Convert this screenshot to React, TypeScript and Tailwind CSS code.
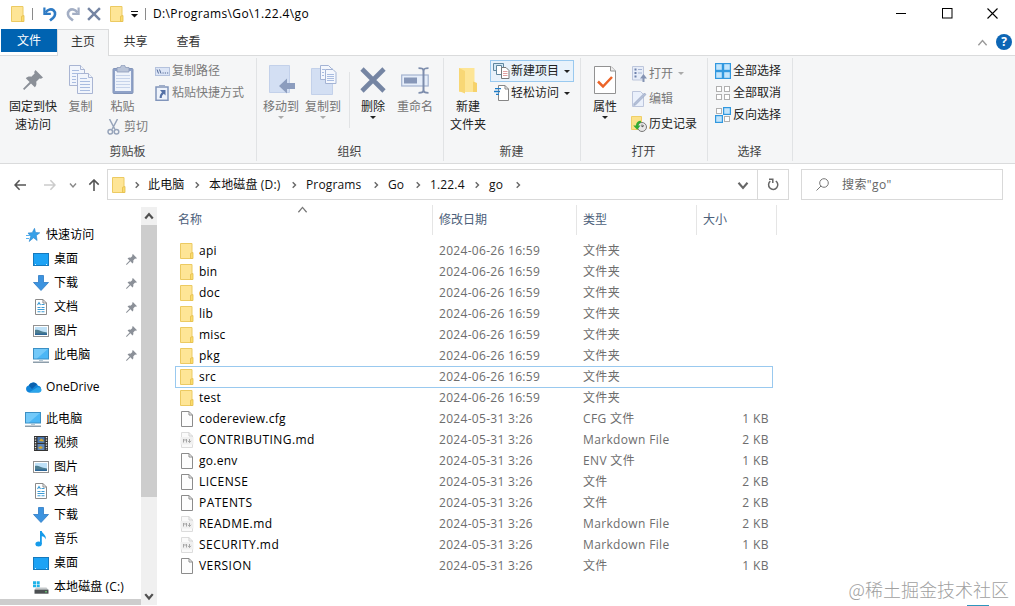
import type { ReactNode } from "react"
import clsx from "clsx"

/* ---------- Icons ---------- */

function FolderIcon() {
  return (
    <svg width="14" height="16" viewBox="0 0 14 16" className="shrink-0">
      <path d="M.5.5h11.500v15H.5z" fill="#fee596" stroke="#ecca62" />
      <path d="M10.500 15.500V10.300l2.500-.8v6z" fill="#fbdc6b" stroke="#e3bd4c" strokeWidth=".8" />
    </svg>
  )
}

function FileIcon() {
  return (
    <svg width="14" height="16" viewBox="0 0 14 16" className="shrink-0">
      <path d="M1.500.5h7.500l3.500 3.500v11.500h-11z" fill="#fdfdfd" stroke="#8c8c8c" />
      <path d="M9 .5V4h3.500" fill="none" stroke="#8c8c8c" />
    </svg>
  )
}

function MarkdownIcon() {
  return (
    <svg width="14" height="16" viewBox="0 0 14 16" className="shrink-0">
      <path d="M1.500.5h7.500l3.500 3.500v11.500h-11z" fill="#fafafa" stroke="#dcdcdc" />
      <path d="M9 .5V4h3.500" fill="none" stroke="#d0d0d0" />
      <rect x=".5" y="5" width="13" height="7.500" fill="#f0f0f0" />
      <path d="M3.500 10.500V7l1.500 1.500L6.500 7v3.500M9.500 7v3.500M8 8.800l1.500 1.700L11 8.800" fill="none" stroke="#a6a6a6" />
    </svg>
  )
}

function UndoIcon({ flip }: { flip?: boolean }) {
  return (
    <svg width="14" height="16" viewBox="0 0 14 16" className={clsx("shrink-0", flip && "-scale-x-100")}>
      <path d="M2.500 6.500C5 3.300 8.500 2.500 10.700 4.500c2.300 2.200 1.500 5.500-.7 7.500l-3 2.500" fill="none" stroke={flip ? "#a3aec4" : "#2d7ac4"} strokeWidth="2.600" />
      <path d="M1.400 1.500v6.400h6.400" fill="none" stroke={flip ? "#a3aec4" : "#2d7ac4"} strokeWidth="2.200" />
    </svg>
  )
}

function CrossIcon({ size }: { size: number }) {
  return (
    <svg width={size} height={size} viewBox="0 0 26 26" className="shrink-0">
      <path d="M2 2l22 22M24 2L2 24" stroke="#7585a3" strokeWidth="4.600" />
    </svg>
  )
}

function Caret({ className = "text-[#222]" }: { className?: string }) {
  return (
    <svg width="6" height="3" viewBox="0 0 6 3" className={clsx("shrink-0", className)}>
      <path d="M0 0h6L3 3z" fill="currentColor" />
    </svg>
  )
}

function PinIcon({ size, color }: { size: number; color: string }) {
  return (
    <svg width={size} height={size} viewBox="0 0 20 20" className="shrink-0">
      <path d="M12.500 0L20 7.500l-2 1.300-1.500-.4-3.300 3.300c.6 2.200.1 4.300-1.400 5.500l-3.800-3.800L1.200 20 0 18.800l6.600-6.800-3.800-3.800c1.500-1.500 3.400-2 5.500-1.400l3.300-3.300-.4-1.500z" fill={color} />
    </svg>
  )
}

function CopyIcon() {
  return (
    <svg width="26" height="30" viewBox="0 0 26 30">
      <g fill="#f1f5fc" stroke="#a9b5d3">
        <path d="M1.500.5h11l4 4v16h-15z" />
        <path d="M9.500 8.500h11l4 4v16h-15z" />
        <path d="M20.500 8.500v4h4M12.500.5v4h4" />
      </g>
      <path d="M4 5.500h7M4 8.500h9M4 11.500h4M4 14.500h4M4 17.500h4M12 13.500h7M12 16.500h10M12 19.500h10M12 22.500h10M12 25.500h10" stroke="#a9bce0" />
    </svg>
  )
}

function PasteIcon() {
  return (
    <svg width="22" height="30" viewBox="0 0 22 30">
      <rect x="1" y="3.500" width="20" height="25" rx="1" fill="#8fa2c8" stroke="#8294b8" />
      <rect x="3" y="6" width="16" height="20" fill="#eef3fb" />
      <path d="M5 2.500h3.500a2.500 2.500 0 0 1 5 0H17V7H5z" fill="#b9c4d8" stroke="#8b9aba" strokeWidth=".8" />
      <path d="M4 10.500h14M4 13.500h14M4 16.500h14M4 19.500h14M4 22.500h14" stroke="#c6d3ea" />
    </svg>
  )
}

function ScissorsIcon() {
  return (
    <svg width="13" height="16" viewBox="0 0 13 16" fill="none" stroke="#97a4ba" strokeWidth="1.500">
      <path d="M2.500 0l5.500 10.500M10.500 0L5 10.500" />
      <circle cx="3.300" cy="12.800" r="2.300" />
      <circle cx="9.500" cy="12.800" r="2.300" />
    </svg>
  )
}

function CopyPathIcon() {
  return (
    <svg width="15" height="9" viewBox="0 0 15 9">
      <rect x=".5" y=".5" width="14" height="8" fill="#dce5f6" stroke="#b4c2dd" />
      <path d="M2 2.500l1.500 4M4.500 2.500l1.500 4" stroke="#536a96" />
      <path d="M7.500 6h1.200M9.800 6H11M12 6h1.200" stroke="#536a96" strokeWidth="1.200" />
    </svg>
  )
}

function PasteShortcutIcon() {
  return (
    <svg width="14" height="16" viewBox="0 0 14 16">
      <rect x="1" y="2" width="12" height="13.300" fill="#eef3fb" stroke="#8195bb" strokeWidth="1.500" />
      <path d="M4 0h6v3H4z" fill="#9fadc8" />
      <path d="M5 5h5.500v5.500L8.800 8.800C7.300 10 6.800 11 6.800 13H4.600c0-2.500.8-4.200 2.400-5.800z" fill="#5470a5" />
    </svg>
  )
}

function MoveToIcon() {
  return (
    <svg width="28" height="30" viewBox="0 0 28 30">
      <path d="M2.500.5h20v27h-20z" fill="#d3dff3" stroke="#c3d1ea" />
      <path d="M12 21l8-7.500v4.500h8v6h-8v4.500z" fill="#8c9dbe" />
    </svg>
  )
}

function CopyToIcon() {
  return (
    <svg width="28" height="31" viewBox="0 0 28 31">
      <path d="M2.500 3.500h21v26h-21z" fill="#d3dff3" stroke="#c3d1ea" />
      <g fill="#f4f7fd" stroke="#a3b3d4">
        <path d="M11.500.5h8l3 3v11h-11z" />
        <path d="M16.500 4.500h7.500l3 3v11h-10.500z" />
      </g>
      <path d="M13 4.500h3M13 7.500h2M13 10.500h2M18 9.500h7M18 11.500h7M18 13.500h7M18 15.500h7" stroke="#a9bce0" />
    </svg>
  )
}

function RenameIcon() {
  return (
    <svg width="28" height="27" viewBox="0 0 28 27">
      <rect x=".7" y="8" width="26.500" height="11" fill="#e6eefa" stroke="#a4b3cf" strokeWidth="1.200" />
      <rect x="3" y="10.500" width="13" height="6" fill="#8797b8" />
      <path d="M22.500 2v23" stroke="#7d8dac" strokeWidth="2" />
      <path d="M17.500 1.200c3 0 5 .6 5 2.300 0-1.700 2-2.300 5-2.300M17.500 25.800c3 0 5-.6 5-2.300 0 1.700 2 2.300 5 2.300" fill="none" stroke="#7d8dac" strokeWidth="1.800" />
    </svg>
  )
}

function NewFolderIcon() {
  return (
    <svg width="20" height="27" viewBox="0 0 20 27">
      <path d="M1 1h15.500v14L19 17v8H1z" fill="#fde596" />
      <path d="M1 1l6 3v22.500L1 24z" fill="#f8d775" />
      <path d="M15 14.500l4 1.500v9h-4z" fill="#f6d26b" />
    </svg>
  )
}

function NewItemIcon() {
  return (
    <svg width="17" height="16" viewBox="0 0 17 16">
      <path d="M.5.5h10v7h-10z" fill="#d3e8f6" stroke="#60879f" />
      <path d="M3.500 2.500h5v9h-5z" fill="#fff" stroke="#60879f" />
      <path d="M8.500 4.500h4.500l3 3v8H8.500z" fill="#fff" stroke="#777" />
      <path d="M10 8.500h4.500M10 10.500h4.500M10 12.500h4.500" stroke="#e1a1a1" />
    </svg>
  )
}

function EasyAccessIcon() {
  return (
    <svg width="15" height="16" viewBox="0 0 15 16">
      <path d="M4.500.5H11L14.500 4v11.500h-10z" fill="#fff" stroke="#868686" />
      <path d="M11 .5V4h3.500" fill="none" stroke="#868686" />
      <path d="M1 3.700h6M0 6.500h6M2 9.300h3" stroke="#1e7cc8" strokeWidth="1.300" />
    </svg>
  )
}

function PropertiesIcon() {
  return (
    <svg width="22" height="28" viewBox="0 0 22 28">
      <path d="M.5.5H17L21.500 5v22.500H.5z" fill="#fff" stroke="#929292" />
      <path d="M16.500.5V5h5" fill="#eee" stroke="#929292" />
      <path d="M4 15.500l5 5L18 11" fill="none" stroke="#ec6428" strokeWidth="2.500" />
    </svg>
  )
}

function OpenIcon() {
  return (
    <svg width="15" height="16" viewBox="0 0 15 16">
      <path d="M.5.5h11v13.500H.5z" fill="#e7edf8" stroke="#bdc6dc" />
      <path d="M2.500 3.500h2M2.500 7h2M2.500 10.500h2" stroke="#6f82ab" strokeWidth="2" />
      <path d="M6 3.500h4M6 7h4" stroke="#a3b2d2" />
      <path d="M10.500 16v-3.500H8l3.500-4.500 3.500 4.500h-2.500V16z" fill="#8493b3" />
    </svg>
  )
}

function EditIcon() {
  return (
    <svg width="15" height="16" viewBox="0 0 15 16">
      <path d="M.5.5h8l3 3v12H.5z" fill="#eaf0fb" stroke="#bdc6dc" />
      <path d="M2 12.500l-.3 2 2-.7L14 3.500 12.500 2z" fill="#b4c0d8" stroke="#97a4c0" strokeWidth=".7" />
    </svg>
  )
}

function HistoryIcon() {
  return (
    <svg width="16" height="16" viewBox="0 0 16 16">
      <path d="M.5.5h10v13H.5z" fill="#fce28a" stroke="#efcf68" />
      <circle cx="11" cy="11" r="4.500" fill="#e7e7e7" stroke="#777" />
      <path d="M11 8.500V11l2-1.500" fill="none" stroke="#555" />
      <path d="M10 4.800c-3 0-4.800 1.700-5.100 4.600H2.200l4 4.300 3.300-4.300H7.300C7.500 8 8.400 7 10 6.800z" fill="#34ab33" />
    </svg>
  )
}

function TilesIcon({ on }: { on: boolean[] }) {
  return (
    <svg width="16" height="16" viewBox="0 0 16 16">
      {on.map((active, i) => (
        <rect
          key={i}
          x={(i % 2) * 8 + (active ? 0.6 : 1.5)}
          y={Math.floor(i / 2) * 8 + (active ? 0.6 : 1.5)}
          width={active ? 6.8 : 5}
          height={active ? 6.8 : 5}
          fill={active ? "#c2e5fc" : "#fff"}
          stroke={active ? "#3198df" : "#b0b0b0"}
          strokeWidth={active ? 1.2 : 1}
        />
      ))}
    </svg>
  )
}

function Chevron({ dir, size = 8, color = "#666", width = 1.4 }: { dir: "up" | "down" | "right"; size?: number; color?: string; width?: number }) {
  const d = { up: "M1 6l3-3.500L7 6", down: "M1 2.500L4 6l3-3.500", right: "M2.700 1.200L5.500 4 2.700 6.800" }
  return (
    <svg width={size} height={size} viewBox="0 0 8 8" className="shrink-0">
      <path d={d[dir]} fill="none" stroke={color} strokeWidth={width} />
    </svg>
  )
}

function Arrow({ className }: { className: string }) {
  return (
    <svg width="12" height="12" viewBox="0 0 12 12" className={clsx("shrink-0", className)}>
      <path d="M12 6H1.200M5.600 1.300L1 6l4.600 4.700" fill="none" stroke="currentColor" strokeWidth="1.600" />
    </svg>
  )
}

function StarIcon() {
  return (
    <svg width="14" height="14" viewBox="0 0 14 14">
      <path d="M8.500.3l1 4.200 4.300.3-3.500 2.700.8 5-3.500-2.700-4.400 3.700 1.500-5.200L2 5l4.200-.3z" fill="#37a0e8" stroke="#2583cd" strokeWidth=".6" />
      <path d="M0 7.500h4M0 10.500h3" stroke="#58b2ee" />
    </svg>
  )
}

function DesktopIcon() {
  return (
    <svg width="16" height="13" viewBox="0 0 16 13">
      <rect x=".5" y=".5" width="15" height="12" fill="#1da3f5" stroke="#1579bd" />
      <path d="M2 11.500h1M13 11.500h1" stroke="#d7effc" />
    </svg>
  )
}

function DownloadIcon() {
  return (
    <svg width="16" height="16" viewBox="0 0 16 16">
      <path d="M5.500.5h5v7h5L8 15.500.5 7.500h5z" fill="#3c93df" stroke="#2c7ac4" strokeWidth=".8" />
    </svg>
  )
}

function DocumentIcon() {
  return (
    <svg width="12" height="16" viewBox="0 0 12 16">
      <path d="M.5.5H8L11.500 4v11.500H.5z" fill="#fff" stroke="#8a8a8a" />
      <path d="M8 .5V4h3.500" fill="none" stroke="#8a8a8a" />
      <path d="M2.500 6l1.500-2.500L5.500 6M6.500 5.500h3M2.500 8.500h3M6.500 8.500h3M2.500 10.500h7M2.500 12.700h3M6.500 12.700h3" fill="none" stroke="#3d9bd4" strokeWidth="1.100" />
    </svg>
  )
}

function PictureIcon() {
  return (
    <svg width="16" height="12" viewBox="0 0 16 12">
      <rect x=".5" y=".5" width="15" height="11" fill="#fff" stroke="#929292" />
      <rect x="2" y="2" width="12" height="8" fill="#bfe1f7" />
      <path d="M2 5c3-.8 5 1.500 12 2.500V10H2z" fill="#4e7e91" />
      <path d="M2 8.500h12V10H2z" fill="#2c6697" />
    </svg>
  )
}

function ComputerIcon() {
  return (
    <svg width="16" height="15" viewBox="0 0 16 15">
      <rect x=".5" y=".5" width="15" height="10.500" fill="#4bb6f5" stroke="#3b8fc4" />
      <path d="M1 1h14L4 10.500H1z" fill="#8ed5fb" opacity=".6" />
      <path d="M6 12.500h4" stroke="#b5c8d4" />
      <path d="M0 14.200h16" stroke="#718696" strokeWidth="1.200" />
    </svg>
  )
}

function OneDriveIcon() {
  return (
    <svg width="17" height="11" viewBox="0 0 17 11">
      <path d="M4 10.500a3.600 3.600 0 0 1-.3-7A5 5 0 0 1 13 3.800a3.400 3.400 0 0 1 .5 6.700z" fill="#1084d9" />
      <path d="M3.700 3.500A5 5 0 0 1 12 2.300L7 7z" fill="#0b61ae" />
      <path d="M4 10.500L12 5.500c1.500-1 4.800.3 4.500 2.700-.2 1.500-1.500 2.300-3 2.300z" fill="#2ba5ea" />
    </svg>
  )
}

function VideoIcon() {
  return (
    <svg width="14" height="15" viewBox="0 0 14 15">
      <rect width="14" height="15" fill="#333" />
      <path d="M1.500 1v13M12.500 1v13" stroke="#e5e5e5" strokeWidth="1.400" strokeDasharray="1.300 1.200" />
      <rect x="3.500" y="1" width="7" height="6" fill="#4b76ad" />
      <rect x="3.500" y="8" width="7" height="6" fill="#5f87ba" />
      <path d="M5 5l2-2.500 2.500 1.500v1.500zM4 11.500l3-1.500 2 2-3 1z" fill="#d6a92e" />
    </svg>
  )
}

function MusicIcon() {
  return (
    <svg width="12" height="16" viewBox="0 0 12 16">
      <ellipse cx="3.600" cy="13" rx="3.200" ry="2.500" fill="#169bea" />
      <path d="M5 0h1.800c.3 2.600 4.800 3.800 4 8.500-.5-2-2-3-4-3.300V13H5z" fill="#169bea" />
    </svg>
  )
}

function DriveIcon() {
  return (
    <svg width="16" height="13" viewBox="0 0 16 13">
      <path d="M0 .3h3v2.600H0zM3.700.3h3v2.600h-3zM0 3.600h3v2.600H0zM3.700 3.600h3v2.600h-3z" fill="#1fb3e8" />
      <path d="M3 6.500h10.500l2 2.500H1.500z" fill="#c4c8ca" />
      <path d="M1.500 8.700h14v4h-14z" fill="#4c5052" />
      <path d="M12 10.800h2" stroke="#6ee07a" />
    </svg>
  )
}

/* ---------- Ribbon pieces ---------- */

interface BigButtonProps {
  icon: ReactNode
  lines: string[]
  width: string
  disabled?: boolean
  caret?: boolean
}

function BigButton({ icon, lines, width, disabled, caret }: BigButtonProps) {
  return (
    <button className={clsx("flex shrink-0 flex-col items-center pt-[7px]", width, disabled ? "text-[#747474]" : "text-[#222]")}>
      <span className="mb-px flex h-[34px] items-center justify-center">{icon}</span>
      {lines.map((line) => (
        <span key={line} className="h-[18px] leading-[18px] whitespace-nowrap">{line}</span>
      ))}
      {caret && <Caret className={disabled ? "text-[#aaa]" : "text-[#222]"} />}
    </button>
  )
}

interface SmallButtonProps {
  icon: ReactNode
  label: string
  height?: string
  disabled?: boolean
  caret?: boolean
  active?: boolean
}

function SmallButton({ icon, label, height = "h-[22px]", disabled, caret, active }: SmallButtonProps) {
  return (
    <button
      className={clsx(
        "flex items-center whitespace-nowrap border pl-px",
        height,
        active ? "border-[#99c9ef] bg-[#e8f2fb]" : "border-transparent",
        disabled ? "text-[#7a7a7a]" : "text-[#222]",
      )}
    >
      <span className="flex w-[18px] items-center justify-center">{icon}</span>
      <span className="ml-px">{label}</span>
      {caret && <span className="ml-[5px] pr-[3px]"><Caret className={disabled ? "text-[#aaa]" : "text-[#222]"} /></span>}
    </button>
  )
}

function RibbonGroup({ title, width, children }: { title: string; width: string; children: ReactNode }) {
  return (
    <div className={clsx("flex shrink-0 flex-col py-0.5", width)}>
      <div className="flex h-full flex-col border-r border-[#e1e3e5]">
        <div className="-mt-0.5 flex h-[87px] items-start">{children}</div>
        <div className="h-[18px] pr-px text-center leading-[18px] text-[#444]">{title}</div>
      </div>
    </div>
  )
}

function Ribbon() {
  return (
    <div className="flex h-[109px] border-y border-[#dadbdc] bg-[#f5f6f7]">
      <RibbonGroup title="剪贴板" width="w-[257px]">
        <BigButton icon={<PinIcon size={20} color="#8b9098" />} lines={["固定到快", "速访问"]} width="ml-[3px] w-[60px]" />
        <BigButton icon={<CopyIcon />} lines={["复制"]} width="w-[34px] pl-px" disabled />
        <div className="flex w-[55px] flex-col">
          <BigButton icon={<PasteIcon />} lines={["粘贴"]} width="w-[50px] pl-px" disabled />
          <button className="mt-0.5 flex h-[18px] items-center gap-1 pl-2.5 text-[#7a7a7a]">
            <ScissorsIcon />
            <span className="whitespace-nowrap">剪切</span>
          </button>
        </div>
        <div className="-ml-px flex flex-col pt-1">
          <SmallButton icon={<CopyPathIcon />} label="复制路径" disabled />
          <SmallButton icon={<PasteShortcutIcon />} label="粘贴快捷方式" disabled />
        </div>
      </RibbonGroup>

      <RibbonGroup title="组织" width="w-[187px]">
        <BigButton icon={<MoveToIcon />} lines={["移动到"]} width="ml-[3px] w-[42px]" disabled caret />
        <BigButton icon={<CopyToIcon />} lines={["复制到"]} width="w-[42px]" disabled caret />
        <div className="mt-4 ml-[5px] h-[56px] w-px bg-[#e1e3e5]" />
        <BigButton icon={<CrossIcon size={26} />} lines={["删除"]} width="ml-1 w-[38px]" caret />
        <BigButton icon={<RenameIcon />} lines={["重命名"]} width="ml-[3px] w-[40px]" disabled />
      </RibbonGroup>

      <RibbonGroup title="新建" width="w-[137px]">
        <BigButton icon={<NewFolderIcon />} lines={["新建", "文件夹"]} width="w-[46px] pl-0.5" />
        <div className="flex flex-col pt-1">
          <SmallButton icon={<NewItemIcon />} label="新建项目" caret active />
          <SmallButton icon={<EasyAccessIcon />} label="轻松访问" caret />
        </div>
      </RibbonGroup>

      <RibbonGroup title="打开" width="w-[127px]">
        <BigButton icon={<PropertiesIcon />} lines={["属性"]} width="w-[47px] pl-px" caret />
        <div className="flex flex-col pt-[5px]">
          <SmallButton icon={<OpenIcon />} label="打开" height="h-[25px]" disabled caret />
          <SmallButton icon={<EditIcon />} label="编辑" height="h-[25px]" disabled />
          <SmallButton icon={<HistoryIcon />} label="历史记录" height="h-[25px]" />
        </div>
      </RibbonGroup>

      <RibbonGroup title="选择" width="w-[85px]">
        <div className="flex flex-col pt-1 pl-1">
          <SmallButton icon={<TilesIcon on={[true, true, true, true]} />} label="全部选择" />
          <SmallButton icon={<TilesIcon on={[false, false, false, false]} />} label="全部取消" />
          <SmallButton icon={<TilesIcon on={[false, true, true, false]} />} label="反向选择" />
        </div>
      </RibbonGroup>
    </div>
  )
}

/* ---------- Window chrome ---------- */

function TitleBar() {
  return (
    <div className="flex h-7 items-center pb-px pl-[11px]">
      <FolderIcon />
      <div className="ml-[7px] h-3 w-px bg-[#8a8a8a]" />
      <div className="ml-[10px] flex items-center">
        <UndoIcon />
        <span className="ml-[9px]"><UndoIcon flip /></span>
        <span className="ml-[7px]"><CrossIcon size={14} /></span>
        <span className="ml-[9px]"><FolderIcon /></span>
      </div>
      <svg width="7" height="7" viewBox="0 0 7 7" className="mt-0.5 ml-[7px]">
        <path d="M0 .5h7" stroke="#111" />
        <path d="M0 3h7L3.500 6.500z" fill="#111" />
      </svg>
      <div className="ml-[7px] h-3 w-px bg-[#8a8a8a]" />
      <span className="ml-[7px] w-[600px] tracking-[0.37px] text-black">D:\Programs\Go\1.22.4\go</span>
      <div className="ml-auto flex w-[119px] items-center justify-between pr-[17px]">
        <svg width="11" height="11" viewBox="0 0 11 11"><path d="M0 5.500h10" stroke="#000" /></svg>
        <svg width="11" height="11" viewBox="0 0 11 11"><rect x=".5" y=".5" width="9.500" height="9.500" fill="none" stroke="#000" /></svg>
        <svg width="11" height="11" viewBox="0 0 11 11"><path d="M.5.5l10 10M10.500.5l-10 10" stroke="#000" strokeWidth="1.100" /></svg>
      </div>
    </div>
  )
}

function Tabs() {
  return (
    <div className="flex h-[27px] pt-px text-[#333]">
      <div className="ml-px flex h-[23px] w-14 items-center justify-center bg-[#0063b1] pt-px text-white">文件</div>
      <div className="z-10 -mb-px flex h-[27px] w-[52px] items-start justify-center border-x border-t border-[#dadbdc] bg-[#f5f6f7] pt-[3px]">主页</div>
      <div className="w-[53px] pt-1 text-center">共享</div>
      <div className="w-[53px] pt-1 text-center">查看</div>
      <div className="ml-auto flex items-center gap-2 pr-[3px]">
        <Chevron dir="up" size={11} color="#9a9a9a" width={1} />
        <div className="flex size-4 items-center justify-center rounded-full bg-[#0d66b5] text-[12px] leading-none font-bold text-white">?</div>
      </div>
    </div>
  )
}

const crumbs = [
  { label: "此电脑", width: "w-9" },
  { label: "本地磁盘 (D:)", width: "w-[72px]" },
  { label: "Programs", width: "w-[57px]" },
  { label: "Go", width: "w-[17px]" },
  { label: "1.22.4", width: "w-[34px]" },
  { label: "go", width: "w-4" },
]

function AddressBar() {
  return (
    <div className="flex h-9 items-center pt-[5px] text-[#111]">
      <div className="flex w-[107px] items-center pl-[14px]">
        <Arrow className="text-[#555]" />
        <Arrow className="ml-[18px] rotate-180 text-[#ccc]" />
        <span className="ml-[13px]"><Chevron dir="down" color="#888" /></span>
        <Arrow className="ml-[11px] rotate-90 text-[#555]" />
      </div>
      <div className="flex h-[31px] w-[682px] items-center border border-[#d9d9d9] pl-1">
        <FolderIcon />
        <span className="flex w-[22px] justify-center"><Chevron dir="right" /></span>
        {crumbs.map((crumb) => (
          <div key={crumb.label} className="flex items-center">
            <span className={clsx("whitespace-nowrap tracking-[0.15px]", crumb.width)}>{crumb.label}</span>
            <span className="flex w-[25px] justify-center"><Chevron dir="right" /></span>
          </div>
        ))}
        <div className="ml-auto flex h-full items-center">
          <span className="mr-2"><Chevron dir="down" size={12} /></span>
          <span className="flex h-full w-[31px] items-center justify-center border-l border-[#d9d9d9]">
            <svg width="12" height="13" viewBox="0 0 12 13">
              <path d="M8.800 3A4.600 4.600 0 1 1 3.300 3.200" fill="none" stroke="#666" strokeWidth="1.500" />
              <path d="M2 1.200h3.800V5" fill="none" stroke="#666" strokeWidth="1.500" />
            </svg>
          </span>
        </div>
      </div>
      <div className="ml-3 flex h-[31px] w-[202px] items-center border border-[#d9d9d9] pl-[14px] text-[#666]">
        <svg width="13" height="13" viewBox="0 0 13 13" fill="none" stroke="#777">
          <circle cx="8" cy="5" r="4.300" />
          <path d="M5 8L.5 12.500" />
        </svg>
        <span className="ml-[13px] tracking-[0.4px]">搜索"go"</span>
      </div>
    </div>
  )
}

/* ---------- Sidebar ---------- */

interface NavItem {
  label: string
  icon: ReactNode
  root?: boolean
  pinned?: boolean
}

const navItems: NavItem[] = [
  { label: "快速访问", icon: <StarIcon />, root: true },
  { label: "桌面", icon: <DesktopIcon />, pinned: true },
  { label: "下载", icon: <DownloadIcon />, pinned: true },
  { label: "文档", icon: <DocumentIcon />, pinned: true },
  { label: "图片", icon: <PictureIcon />, pinned: true },
  { label: "此电脑", icon: <ComputerIcon />, pinned: true },
  { label: "OneDrive", icon: <OneDriveIcon />, root: true },
  { label: "此电脑", icon: <ComputerIcon />, root: true },
  { label: "视频", icon: <VideoIcon /> },
  { label: "图片", icon: <PictureIcon /> },
  { label: "文档", icon: <DocumentIcon /> },
  { label: "下载", icon: <DownloadIcon /> },
  { label: "音乐", icon: <MusicIcon /> },
  { label: "桌面", icon: <DesktopIcon /> },
  { label: "本地磁盘 (C:)", icon: <DriveIcon /> },
]

function Sidebar() {
  return (
    <div className="flex w-[158px] shrink-0 pt-[7px]">
      <div className="flex w-[141px] flex-col pt-2">
        {navItems.map((item, i) => (
          <div
            key={i}
            className={clsx("flex h-6 shrink-0 items-center", item.root ? "mt-2 pl-6" : "pl-8")}
          >
            <span className="flex w-[18px] justify-center">{item.icon}</span>
            <span className="ml-1 whitespace-nowrap tracking-[0.1px] text-black">{item.label}</span>
            {item.pinned && <span className="mr-[4px] ml-auto"><PinIcon size={11} color="#8b9098" /></span>}
          </div>
        ))}
        <div className="mt-auto h-[6px] shrink-0 bg-[#cdcdcd]" />
      </div>
      <div className="flex w-4 flex-col items-center bg-[#f0f0f0]">
        <div className="flex h-[18px] items-center"><Chevron dir="up" size={10} color="#505050" width={1.8} /></div>
        <div className="h-[272px] w-full bg-[#cdcdcd]" />
        <div className="mt-auto flex h-[18px] items-center"><Chevron dir="down" size={10} color="#505050" width={1.8} /></div>
      </div>
    </div>
  )
}

/* ---------- File list ---------- */

const folders = ["api", "bin", "doc", "lib", "misc", "pkg", "src", "test"]

const files = [
  { name: "codereview.cfg", type: "CFG 文件", size: "1 KB" },
  { name: "CONTRIBUTING.md", type: "Markdown File", size: "2 KB" },
  { name: "go.env", type: "ENV 文件", size: "1 KB" },
  { name: "LICENSE", type: "文件", size: "2 KB" },
  { name: "PATENTS", type: "文件", size: "2 KB" },
  { name: "README.md", type: "Markdown File", size: "2 KB" },
  { name: "SECURITY.md", type: "Markdown File", size: "1 KB" },
  { name: "VERSION", type: "文件", size: "1 KB" },
]

const rows = [
  ...folders.map((name) => ({ name, date: "2024-06-26 16:59", type: "文件夹", size: "", icon: <FolderIcon /> })),
  ...files.map((file) => ({
    ...file,
    date: "2024-05-31 3:26",
    icon: file.type === "Markdown File" ? <MarkdownIcon /> : <FileIcon />,
  })),
]

function FileList() {
  return (
    <div className="flex-1 pl-[17px]">
      <div className="flex h-[35px] pt-[5px] text-[#4c607a]">
        <div className="relative flex h-[30px] w-[258px] items-center border-r border-[#e5e5e5] pl-[3px]">
          名称
          <span className="absolute -top-px left-[122px]"><Chevron dir="up" size={11} color="#777" width={0.9} /></span>
        </div>
        <div className="flex w-36 items-center border-r border-[#e5e5e5] pl-1.5">修改日期</div>
        <div className="flex w-[120px] items-center border-r border-[#e5e5e5] pl-1.5">类型</div>
        <div className="flex w-20 items-center border-r border-[#e5e5e5] pl-1.5">大小</div>
      </div>
      <div className="pt-[5px]">
        {rows.map((row) => (
          <div
            key={row.name}
            className={clsx("flex h-[21px] w-[598px] items-center border text-[#6d6d6d]", row.name === "src" ? "h-[22px] -mb-px border-[#99c9ef]" : "border-transparent")}
          >
            <div className="flex w-[263px] items-center gap-[5px] pl-1">
              {row.icon}
              <span className={clsx("text-black", /^[A-Z]/.test(row.name) ? "tracking-[0.45px]" : "tracking-[0.25px]")}>{row.name}</span>
            </div>
            <div className="w-36 tracking-[0.3px]">{row.date}</div>
            <div className="w-[120px] tracking-[0.35px]">{row.type}</div>
            <div className="flex-1 pr-[3px] text-right tracking-[0.4px]">{row.size}</div>
          </div>
        ))}
      </div>
    </div>
  )
}

export default function App() {
  return (
    <div className="relative flex h-[606px] w-[1015px] flex-col overflow-hidden bg-white font-['Open_Sans','Noto_Sans_CJK_SC',sans-serif] text-[12px] leading-[18px]">
      <TitleBar />
      <Tabs />
      <Ribbon />
      <AddressBar />
      <div className="flex min-h-0 flex-1 pb-px">
        <Sidebar />
        <FileList />
      </div>
      <div className="absolute right-1.5 bottom-[3px] font-['Noto_Sans_CJK_SC',sans-serif] text-[18px] leading-7 font-light whitespace-nowrap text-[#a0a0a0]">@稀土掘金技术社区</div>
      <div className="absolute bottom-0 left-[967px] h-px w-[22px] bg-[#2f96bd]" />
    </div>
  )
}
